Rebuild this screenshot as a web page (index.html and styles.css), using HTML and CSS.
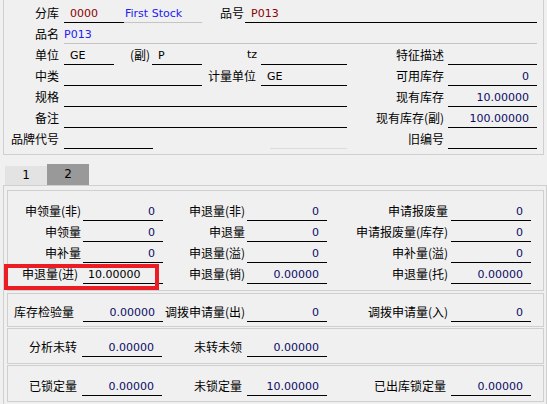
FILE: index.html
```html
<!DOCTYPE html>
<html lang="zh">
<head>
<meta charset="utf-8">
<title>库存</title>
<link rel="stylesheet" href="styles.css">
</head>
<body>
<div class="top">
  <div class="row">
    <div class="lbl w60">分库</div>
    <div class="fld w60 maroon pl6">0000</div>
    <div class="fld gray w78 blue pl1">First Stock</div>
    <div class="lbl w43 pr1">品号</div>
    <div class="fld w292 maroon pl6">P013</div>
  </div>
  <div class="row">
    <div class="lbl w60">品名</div>
    <div class="fld gray w473 blue">P013</div>
  </div>
  <div class="row">
    <div class="lbl w60">单位</div>
    <div class="fld w50 pl6">GE</div>
    <div class="lbl w38 pr2">(副)</div>
    <div class="fld w50 pl6">P</div>
    <div class="lbl w59 pr4 latin">tz</div>
    <div class="fld w86"></div>
    <div class="lbl w101 pr4">特征描述</div>
    <div class="fld w89"></div>
  </div>
  <div class="row">
    <div class="lbl w60">中类</div>
    <div class="fld w138"></div>
    <div class="lbl w59">计量单位</div>
    <div class="fld w86 pl6">GE</div>
    <div class="lbl w101 pr4">可用库存</div>
    <div class="fld w89 num">0</div>
  </div>
  <div class="row">
    <div class="lbl w60">规格</div>
    <div class="fld w283"></div>
    <div class="lbl w101 pr4">现有库存</div>
    <div class="fld w89 num">10.00000</div>
  </div>
  <div class="row">
    <div class="lbl w60">备注</div>
    <div class="fld w283"></div>
    <div class="lbl w101 pr4">现有库存(副)</div>
    <div class="fld w89 num">100.00000</div>
  </div>
  <div class="row">
    <div class="lbl w60">品牌代号</div>
    <div class="fld w89"></div>
    <div class="spacer"></div>
    <div class="fld faint w77"></div>
    <div class="lbl w101 pr4">旧编号</div>
    <div class="fld w89"></div>
  </div>
</div>

<div class="tabs">
  <div class="tab">1</div>
  <div class="tab active">2</div>
</div>

<div class="lower">
  <div class="grp g1">
    <div class="row">
      <div class="lbl c1">申领量(非)</div>
      <div class="fld w80 num">0</div>
      <div class="lbl c2">申退量(非)</div>
      <div class="fld w80 num">0</div>
      <div class="lbl c3">申请报废量</div>
      <div class="fld w80 num">0</div>
    </div>
    <div class="row">
      <div class="lbl c1">申领量</div>
      <div class="fld w80 num">0</div>
      <div class="lbl c2">申退量</div>
      <div class="fld w80 num">0</div>
      <div class="lbl c3">申请报废量(库存)</div>
      <div class="fld w80 num">0</div>
    </div>
    <div class="row">
      <div class="lbl c1">申补量</div>
      <div class="fld w80 num">0</div>
      <div class="lbl c2">申退量(溢)</div>
      <div class="fld w80 num">0</div>
      <div class="lbl c3">申补量(溢)</div>
      <div class="fld w80 num">0</div>
    </div>
    <div class="row">
      <div class="lbl c1 pr5">申退量(进)</div>
      <div class="fld w80 editing">10.00000</div>
      <div class="lbl c2">申退量(销)</div>
      <div class="fld w80 num">0.00000</div>
      <div class="lbl c3">申退量(托)</div>
      <div class="fld w80 num">0.00000</div>
    </div>
  </div>

  <div class="grp g2">
    <div class="row">
      <div class="lbl c1 pr8">库存检验量</div>
      <div class="fld w80 num">0.00000</div>
      <div class="lbl c2">调拨申请量(出)</div>
      <div class="fld w80 num">0</div>
      <div class="lbl c3">调拨申请量(入)</div>
      <div class="fld w80 num">0</div>
    </div>
  </div>

  <div class="grp g3">
    <div class="row">
      <div class="lbl d1">分析未转</div>
      <div class="fld w80 num">0.00000</div>
      <div class="lbl d2">未转未领</div>
      <div class="fld w80 num">0.00000</div>
    </div>
  </div>

  <div class="grp g4">
    <div class="row">
      <div class="lbl d1">已锁定量</div>
      <div class="fld w80 num">0.00000</div>
      <div class="lbl d2">未锁定量</div>
      <div class="fld w80 num">10.00000</div>
      <div class="lbl d3">已出库锁定量</div>
      <div class="fld w80 num">0.00000</div>
    </div>
  </div>
</div>

<div class="highlight"></div>
</body>
</html>
```

FILE: styles.css
```css
* { box-sizing: border-box; }

html, body {
  margin: 0;
  padding: 0;
  background: #f0f0f0;
}

body {
  width: 547px;
  height: 404px;
  overflow: hidden;
  position: relative;
  font-family: "Noto Sans CJK SC", "DejaVu Sans", sans-serif;
  font-size: 12px;
  color: #000;
}

.top {
  margin-left: 3px;
  width: 541px;
  height: 155px;
  padding-top: 2px;
  border: 1px solid #cfcfcf;
  border-top: none;
}

.row {
  display: flex;
  height: 21px;
}

.lbl {
  flex: none;
  height: 20px;
  padding-top: 3px;
  line-height: 16px;
  text-align: right;
  padding-right: 5px;
  white-space: nowrap;
}

.lbl.latin {
  font-family: "DejaVu Sans", sans-serif;
  font-size: 11px;
}

.fld {
  flex: none;
  height: 21px;
  border-bottom: 1px solid #000;
  padding-top: 4px;
  line-height: 15px;
  font-family: "DejaVu Sans", sans-serif;
  font-size: 11px;
  white-space: nowrap;
  overflow: hidden;
}

.fld.gray { border-bottom-color: #c4c4c4; }
.fld.faint { border-bottom-color: #dcdcdc; }

.num {
  text-align: right;
  padding-right: 8px;
  color: #0c0c64;
}

.editing {
  padding-left: 5px;
  color: #000;
}

.maroon { color: #8b0000; }
.blue { color: #2020f0; }

.pl1 { padding-left: 1px; }
.pl6 { padding-left: 6px; }
.pr1 { padding-right: 1px; }
.pr2 { padding-right: 2px; }
.pr4 { padding-right: 4px; }
.pr5 { padding-right: 5px; }
.pr8 { padding-right: 8px; }

.w38 { width: 38px; }
.w43 { width: 43px; }
.w50 { width: 50px; }
.w59 { width: 59px; }
.w60 { width: 60px; }
.w77 { width: 77px; }
.w78 { width: 78px; }
.w80 { width: 80px; }
.w86 { width: 86px; }
.w89 { width: 89px; }
.w101 { width: 101px; }
.w138 { width: 138px; }
.w283 { width: 283px; }
.w292 { width: 292px; }
.w473 { width: 473px; }

.spacer { flex: none; width: 117px; }

.tabs {
  display: flex;
  align-items: flex-end;
  margin-left: 5px;
  margin-top: 9px;
  height: 21px;
}

.tab {
  width: 42px;
  height: 19px;
  background: #e3e3e3;
  text-align: center;
  font-family: "DejaVu Sans", sans-serif;
  font-size: 12px;
  line-height: 19px;
}

.tab.active {
  height: 21px;
  background: #999999;
  line-height: 21px;
}

.lower {
  margin-left: 3px;
  width: 544px;
  height: 219px;
  border: 1px solid #cfcfcf;
  border-bottom: none;
  padding: 4px 0 0 3px;
}

.grp {
  width: 537px;
  border: 1px solid #cfcfcf;
}

.g1 { height: 101px; padding-top: 9px; margin-bottom: 2px; }
.g2 { height: 34px; padding-top: 7px; margin-bottom: 1px; }
.g3 { height: 36px; padding-top: 7px; margin-bottom: 1px; }
.g4 { height: 37px; padding-top: 9px; }

.c1 { width: 75px; padding-right: 2px; }
.c1.pr5 { padding-right: 5px; }
.c1.pr8 { padding-right: 9px; }
.c2 { width: 84px; padding-right: 2px; }
.c3 { width: 124px; padding-right: 3px; }
.d1 { width: 74px; padding-right: 5px; }
.d2 { width: 85px; padding-right: 5px; }
.d3 { width: 124px; padding-right: 5px; }

.highlight {
  position: absolute;
  left: 4px;
  top: 264px;
  width: 155px;
  height: 26px;
  border: 4px solid #ec1c24;
}
```
